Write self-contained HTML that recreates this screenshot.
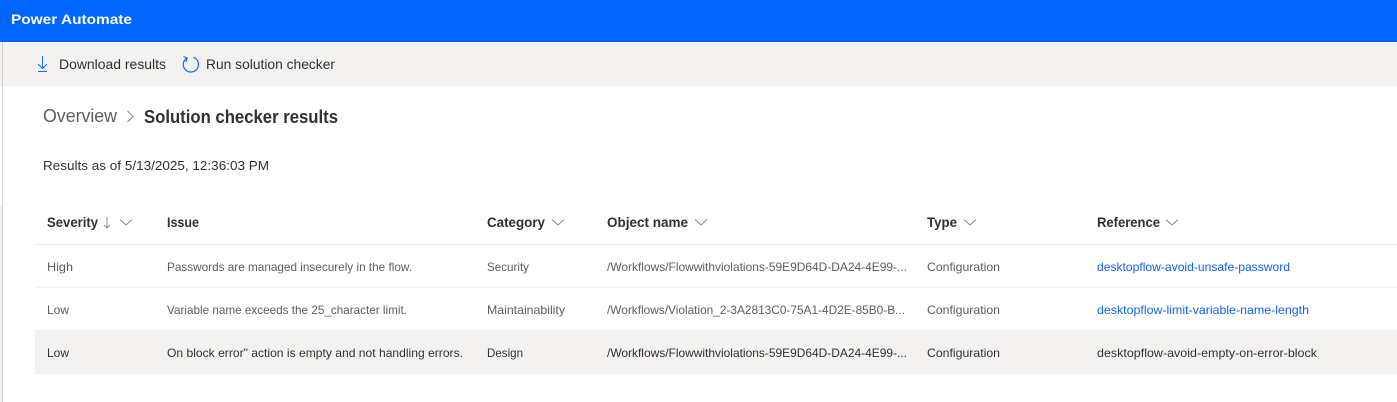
<!DOCTYPE html>
<html lang="en">
<head>
<meta charset="utf-8">
<title>Solution checker results</title>
<style>
html,body{margin:0;padding:0;background:#fff;width:1397px;height:402px;overflow:hidden}
svg{display:block}
text{font-family:"Liberation Sans",sans-serif}
.r{font-size:12px;fill:#605e5c}
.d{font-size:12px;fill:#323130}
.l{font-size:12px;fill:#0f62fe}
.h{font-size:14px;font-weight:700;fill:#323130}
.c{fill:none;stroke:#8a8886;stroke-width:1}
</style>
</head>
<body>
<svg width="1397" height="402" viewBox="0 0 1397 402" xmlns="http://www.w3.org/2000/svg">
<rect width="1397" height="402" fill="#fff"/>
<rect x="0" y="0" width="1397" height="42" fill="#0066ff"/>
<rect x="0" y="42" width="1397" height="44" fill="#f3f2f1"/>
<rect x="0" y="206" width="2" height="196" fill="#f3f2f1"/>
<rect x="2" y="42" width="1" height="360" fill="#d2d0ce"/>

<text x="11" y="24" font-size="14" font-weight="700" fill="#fff" textLength="121" lengthAdjust="spacingAndGlyphs">Power Automate</text>

<path d="M42.5 56V68M38 64L42.5 68.5L47 64M38 71.5H47" fill="none" stroke="#0f6cff" stroke-width="1"/>
<text x="59" y="69" font-size="14" fill="#323130" textLength="107" lengthAdjust="spacingAndGlyphs">Download results</text>

<path d="M186.5 58.2A7.6 7.6 0 1 0 193.5 57.3" fill="none" stroke="#0f6cff" stroke-width="1.2"/>
<path d="M183.5 56.5L187.2 58.2L185.8 62" fill="none" stroke="#0f6cff" stroke-width="1.2"/>
<text x="206" y="69" font-size="14" fill="#323130" textLength="129" lengthAdjust="spacingAndGlyphs">Run solution checker</text>

<text x="43" y="122" font-size="18" fill="#605e5c" textLength="74" lengthAdjust="spacingAndGlyphs">Overview</text>
<path d="M127.5 111L133 116.5L127.5 122" fill="none" stroke="#8a8886" stroke-width="1"/>
<text x="144" y="123" font-size="18" font-weight="700" fill="#323130" textLength="194" lengthAdjust="spacingAndGlyphs">Solution checker results</text>

<text x="43" y="170" font-size="13" fill="#323130" textLength="226" lengthAdjust="spacingAndGlyphs">Results as of 5/13/2025, 12:36:03 PM</text>

<text class="h" x="47" y="227" textLength="51" lengthAdjust="spacingAndGlyphs">Severity</text>
<path d="M107 217V228M104 225L107 228L110 225" fill="none" stroke="#a08a78" stroke-width="1"/>
<path class="c" d="M120 219.5L126 225L132 219.5"/>
<text class="h" x="167" y="227" textLength="32" lengthAdjust="spacingAndGlyphs">Issue</text>
<text class="h" x="487" y="227" textLength="58" lengthAdjust="spacingAndGlyphs">Category</text>
<path class="c" d="M552 219.5L558 225L564 219.5"/>
<text class="h" x="607" y="227" textLength="81" lengthAdjust="spacingAndGlyphs">Object name</text>
<path class="c" d="M695 219.5L701 225L707 219.5"/>
<text class="h" x="927" y="227" textLength="30" lengthAdjust="spacingAndGlyphs">Type</text>
<path class="c" d="M964 219.5L970 225L976 219.5"/>
<text class="h" x="1097" y="227" textLength="63" lengthAdjust="spacingAndGlyphs">Reference</text>
<path class="c" d="M1166 219.5L1172 225L1178 219.5"/>

<rect x="35" y="244" width="1362" height="1" fill="#edebe9"/>
<rect x="35" y="287" width="1362" height="1" fill="#f3f2f1"/>
<rect x="35" y="330" width="1362" height="44" fill="#f3f2f1"/>

<text class="r" x="47" y="271" textLength="26" lengthAdjust="spacingAndGlyphs">High</text>
<text class="r" x="167" y="271" textLength="245" lengthAdjust="spacingAndGlyphs">Passwords are managed insecurely in the flow.</text>
<text class="r" x="487" y="271" textLength="42" lengthAdjust="spacingAndGlyphs">Security</text>
<text class="r" x="607" y="271" textLength="300" lengthAdjust="spacingAndGlyphs">/Workflows/Flowwithviolations-59E9D64D-DA24-4E99-...</text>
<text class="r" x="927" y="271" textLength="73" lengthAdjust="spacingAndGlyphs">Configuration</text>
<text class="l" x="1097" y="271" textLength="193" lengthAdjust="spacingAndGlyphs">desktopflow-avoid-unsafe-password</text>

<text class="r" x="47" y="314" textLength="22" lengthAdjust="spacingAndGlyphs">Low</text>
<text class="r" x="167" y="314" textLength="240" lengthAdjust="spacingAndGlyphs">Variable name exceeds the 25_character limit.</text>
<text class="r" x="487" y="314" textLength="78" lengthAdjust="spacingAndGlyphs">Maintainability</text>
<text class="r" x="607" y="314" textLength="298" lengthAdjust="spacingAndGlyphs">/Workflows/Violation_2-3A2813C0-75A1-4D2E-85B0-B...</text>
<text class="r" x="927" y="314" textLength="73" lengthAdjust="spacingAndGlyphs">Configuration</text>
<text class="l" x="1097" y="314" textLength="212" lengthAdjust="spacingAndGlyphs">desktopflow-limit-variable-name-length</text>

<text class="d" x="47" y="357" textLength="22" lengthAdjust="spacingAndGlyphs">Low</text>
<text class="d" x="167" y="357" textLength="296" lengthAdjust="spacingAndGlyphs">On block error" action is empty and not handling errors.</text>
<text class="d" x="487" y="357" textLength="36" lengthAdjust="spacingAndGlyphs">Design</text>
<text class="d" x="607" y="357" textLength="300" lengthAdjust="spacingAndGlyphs">/Workflows/Flowwithviolations-59E9D64D-DA24-4E99-...</text>
<text class="d" x="927" y="357" textLength="73" lengthAdjust="spacingAndGlyphs">Configuration</text>
<text class="d" x="1097" y="357" textLength="220" lengthAdjust="spacingAndGlyphs">desktopflow-avoid-empty-on-error-block</text>
</svg>
</body>
</html>
